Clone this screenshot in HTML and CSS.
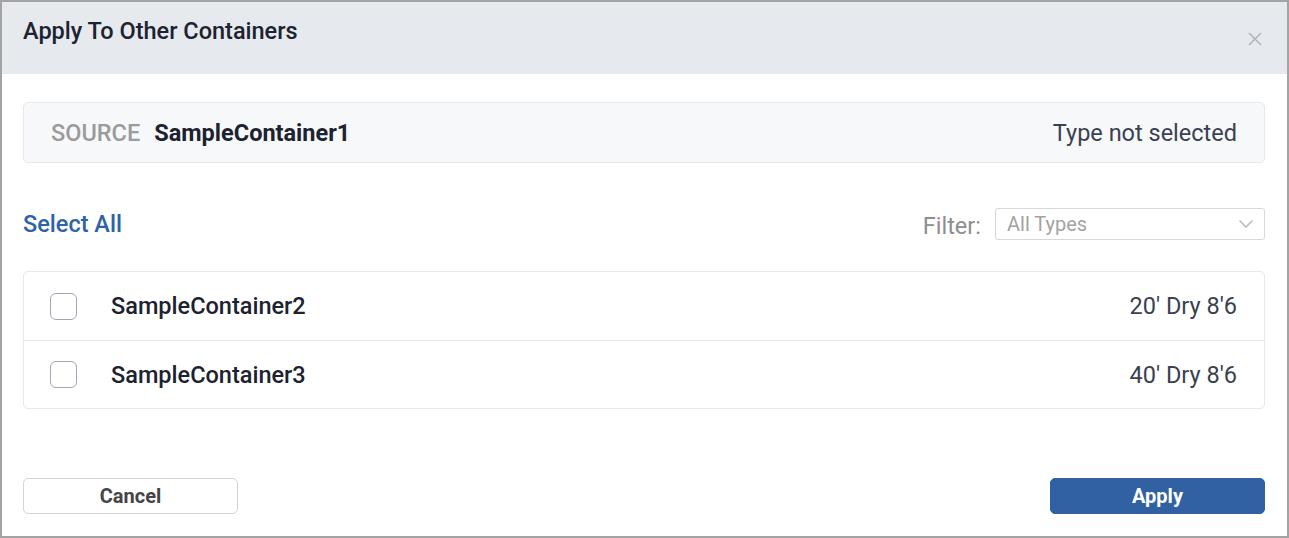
FILE: index.html
```html
<!DOCTYPE html>
<html lang="en">
<head>
<meta charset="utf-8">
<title>Apply To Other Containers</title>
<link rel="stylesheet" href="styles.css">
</head>
<body>
<div class="dialog">
  <div class="dialog-header">
    <h2 class="dialog-title">Apply To Other Containers</h2>
    <button class="close-btn" aria-label="Close">
      <svg width="14" height="14" viewBox="0 0 14 14"><path d="M1 1L13 13M13 1L1 13" stroke="#b3b5b9" stroke-width="1.6" fill="none"/></svg>
    </button>
  </div>
  <div class="dialog-body">
    <div class="source-box">
      <span class="source-label">SOURCE</span>
      <span class="source-name">SampleContainer1</span>
      <span class="source-type">Type not selected</span>
    </div>
    <div class="toolbar">
      <a class="select-all" href="#">Select All</a>
      <div class="filter">
        <span class="filter-label">Filter:</span>
        <div class="select">
          <span>All Types</span>
          <svg width="16" height="10" viewBox="0 0 16 10"><path d="M1.5 1.5L8 8L14.5 1.5" stroke="#b9bcc2" stroke-width="1.6" fill="none"/></svg>
        </div>
      </div>
    </div>
    <div class="list">
      <div class="row">
        <span class="checkbox"></span>
        <span class="row-name">SampleContainer2</span>
        <span class="row-type">20' Dry 8'6</span>
      </div>
      <div class="row">
        <span class="checkbox"></span>
        <span class="row-name">SampleContainer3</span>
        <span class="row-type">40' Dry 8'6</span>
      </div>
    </div>
  </div>
  <div class="dialog-footer">
    <button class="btn btn-cancel">Cancel</button>
    <button class="btn btn-apply">Apply</button>
  </div>
</div>
</body>
</html>
```
FILE: styles.css
```css
* { box-sizing: border-box; }

html, body {
  margin: 0;
  padding: 0;
  background: #ffffff;
}

body {
  font-family: Roboto, "Liberation Sans", Arial, sans-serif;
  color: #1c2230;
}

.dialog {
  width: 1289px;
  height: 538px;
  border: 2px solid #a3a3a3;
  display: flex;
  flex-direction: column;
  background: #fff;
}

.dialog-header {
  height: 72px;
  background: #e6e9ed;
  display: flex;
  justify-content: space-between;
  align-items: flex-start;
  padding: 15px 25px 0 21px;
}

.dialog-title {
  margin: 0;
  font-size: 23.5px;
  line-height: 28px;
  font-weight: 500;
  color: #1c2230;
}

.close-btn {
  border: 0;
  background: none;
  padding: 0;
  margin-top: 15px;
  width: 14px;
  height: 14px;
  display: flex;
}

.dialog-body {
  padding: 28px 22px 0 21px;
}

.source-box {
  height: 61px;
  background: #f7f8fa;
  border: 1px solid #e6e8eb;
  border-radius: 5px;
  display: flex;
  align-items: center;
  padding: 0 27px;
  font-size: 23.5px;
}

.source-label {
  color: #9b9b9b;
  font-weight: 500;
}

.source-name {
  margin-left: 14px;
  font-weight: 700;
  color: #1c2230;
}

.source-type {
  margin-left: auto;
  color: #3a4150;
}

.toolbar {
  margin-top: 45px;
  height: 32px;
  display: flex;
  justify-content: space-between;
  align-items: center;
}

.select-all {
  font-size: 23.5px;
  color: #2f62a8;
  text-decoration: none;
  font-weight: 500;
}

.filter {
  display: flex;
  align-items: center;
  gap: 14px;
}

.filter-label {
  font-size: 23.5px;
  color: #8e8e8e;
  margin-top: 4px;
}

.select {
  width: 270px;
  height: 32px;
  border: 1px solid #d6d7da;
  border-radius: 3px;
  display: flex;
  align-items: center;
  justify-content: space-between;
  padding: 0 10px 0 11px;
  font-size: 20px;
  color: #a2a2a2;
}

.list {
  margin-top: 31px;
  border: 1px solid #e6e8eb;
  border-radius: 5px;
}

.row {
  height: 68px;
  display: flex;
  align-items: center;
  padding: 0 27px 0 26px;
  font-size: 23.5px;
}

.row + .row {
  border-top: 1px solid #e6e8eb;
}

.checkbox {
  width: 27px;
  height: 27px;
  border: 1px solid #a2a6b4;
  border-radius: 6px;
  background: #fff;
  flex: none;
}

.row-name {
  margin-left: 34px;
  font-weight: 500;
  color: #1c2230;
}

.row-type {
  margin-left: auto;
  color: #3a4150;
}

.dialog-footer {
  margin-top: auto;
  padding: 0 22px 22px 21px;
  display: flex;
  justify-content: space-between;
}

.btn {
  width: 215px;
  height: 36px;
  border-radius: 5px;
  font-family: Roboto, "Liberation Sans", Arial, sans-serif;
  font-size: 20px;
  font-weight: 700;
  cursor: pointer;
}

.btn-cancel {
  background: #fff;
  border: 1px solid #d3d5db;
  color: #454545;
}

.btn-apply {
  background: #3160a3;
  border: 1px solid #3160a3;
  color: #fff;
}
```
